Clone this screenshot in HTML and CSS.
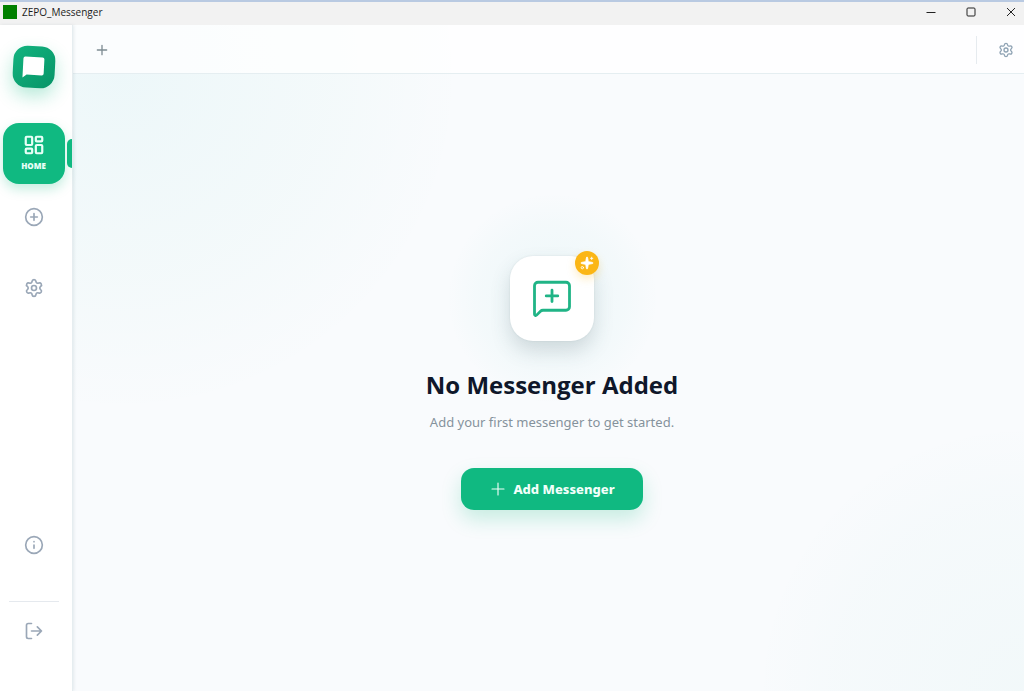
FILE: index.html
```html
<!DOCTYPE html>
<html lang="en">
<head>
<meta charset="utf-8">
<meta name="viewport" content="width=device-width, initial-scale=1">
<title>ZEPO_Messenger</title>
<link rel="stylesheet" href="styles.css">
</head>
<body>
<div class="window">
  <header class="titlebar">
    <span class="app-mark"></span>
    <span class="app-name">ZEPO_Messenger</span>
    <div class="window-controls">
      <button type="button" aria-label="Minimize"><svg width="10" height="10" viewBox="0 0 10 10"><path d="M0.5 5.5h9"/></svg></button>
      <button type="button" aria-label="Maximize"><svg width="10" height="10" viewBox="0 0 10 10"><rect x="1" y="1" width="8" height="8" rx="1"/></svg></button>
      <button type="button" aria-label="Close"><svg width="10" height="10" viewBox="0 0 10 10"><path d="M1 1l8 8M9 1l-8 8"/></svg></button>
    </div>
  </header>
  <div class="app">
    <nav class="sidebar" aria-label="Main">
      <div class="logo">
        <svg class="logo-mark" width="24" height="24" viewBox="0 0 24 24"><path d="M3 2h17a2 2 0 0 1 2 2v14a2 2 0 0 1-2 2H5l-4 3V4a2 2 0 0 1 2-2z"/></svg>
      </div>
      <button type="button" class="nav-item active">
        <svg class="icon" width="22" height="22" viewBox="0 0 24 24"><rect x="3" y="3" width="7" height="9" rx="1"/><rect x="14" y="3" width="7" height="5" rx="1"/><rect x="14" y="12" width="7" height="9" rx="1"/><rect x="3" y="16" width="7" height="5" rx="1"/></svg>
        <span class="nav-label">HOME</span>
      </button>
      <button type="button" class="nav-item" aria-label="Add">
        <svg class="icon" width="20" height="20" viewBox="0 0 24 24"><circle cx="12" cy="12" r="10"/><path d="M8 12h8M12 8v8"/></svg>
      </button>
      <button type="button" class="nav-item" aria-label="Settings">
        <svg class="icon" width="20" height="20" viewBox="0 0 24 24"><path d="M9.671 4.136a2.340 2.340 0 0 1 4.659 0 2.340 2.340 0 0 0 3.319 1.915 2.340 2.340 0 0 1 2.330 4.033 2.340 2.340 0 0 0 0 3.831 2.340 2.340 0 0 1-2.330 4.033 2.340 2.340 0 0 0-3.319 1.915 2.340 2.340 0 0 1-4.659 0 2.340 2.340 0 0 0-3.320-1.915 2.340 2.340 0 0 1-2.330-4.033 2.340 2.340 0 0 0 0-3.831A2.340 2.340 0 0 1 6.350 6.051a2.340 2.340 0 0 0 3.319-1.915"/><circle cx="12" cy="12" r="3"/></svg>
      </button>
      <div class="sidebar-foot">
        <button type="button" class="nav-item" aria-label="About">
          <svg class="icon" width="20" height="20" viewBox="0 0 24 24"><circle cx="12" cy="12" r="10"/><path d="M12 16v-4M12 8h.01"/></svg>
        </button>
        <hr class="divider">
        <button type="button" class="nav-item" aria-label="Log out">
          <svg class="icon" width="20" height="20" viewBox="0 0 24 24"><path d="M9 21H5a2 2 0 0 1-2-2V5a2 2 0 0 1 2-2h4M16 17l5-5-5-5M21 12H9"/></svg>
        </button>
      </div>
    </nav>
    <div class="workspace">
      <div class="tabbar">
        <button type="button" class="tab-add" aria-label="New tab"><svg class="icon" width="16" height="16" viewBox="0 0 24 24"><path d="M5 12h14M12 5v14"/></svg></button>
        <div class="tab-tools">
          <button type="button" aria-label="Settings"><svg class="icon" width="16" height="16" viewBox="0 0 24 24"><path d="M9.671 4.136a2.340 2.340 0 0 1 4.659 0 2.340 2.340 0 0 0 3.319 1.915 2.340 2.340 0 0 1 2.330 4.033 2.340 2.340 0 0 0 0 3.831 2.340 2.340 0 0 1-2.330 4.033 2.340 2.340 0 0 0-3.319 1.915 2.340 2.340 0 0 1-4.659 0 2.340 2.340 0 0 0-3.320-1.915 2.340 2.340 0 0 1-2.330-4.033 2.340 2.340 0 0 0 0-3.831A2.340 2.340 0 0 1 6.350 6.051a2.340 2.340 0 0 0 3.319-1.915"/><circle cx="12" cy="12" r="3"/></svg></button>
        </div>
      </div>
      <main class="empty">
        <div class="hero">
          <svg class="icon" width="42" height="42" viewBox="0 0 24 24"><path d="M22 17a2 2 0 0 1-2 2H6.828a2 2 0 0 0-1.414.586l-2.202 2.202A.71.71 0 0 1 2 21.286V5a2 2 0 0 1 2-2h16a2 2 0 0 1 2 2zM12 7.500v6.500M8.700 10.800h6.600"/></svg>
          <span class="badge"><svg class="icon" width="14" height="14" viewBox="0 0 24 24"><path fill="currentColor" d="M11 2.800a1 1 0 0 1 2 0l1 5.600a2 2 0 0 0 1.600 1.600l5.600 1a1 1 0 0 1 0 2l-5.600 1a2 2 0 0 0-1.600 1.600l-1 5.600a1 1 0 0 1-2 0l-1-5.600a2 2 0 0 0-1.600-1.600l-5.600-1a1 1 0 0 1 0-2l5.600-1a2 2 0 0 0 1.600-1.600z"/><path d="M20 2v4M22 4h-4"/><circle cx="4" cy="20" r="2"/></svg></span>
        </div>
        <h1>No Messenger Added</h1>
        <p>Add your first messenger to get started.</p>
        <button type="button" class="primary"><svg class="icon" width="18" height="18" viewBox="0 0 24 24"><path d="M4 12h16M12 4v16"/></svg>Add Messenger</button>
      </main>
    </div>
  </div>
</div>
</body>
</html>
```
FILE: styles.css
```css
* { box-sizing: border-box; }

body {
  margin: 0;
  font-family: "Noto Sans", "Open Sans", sans-serif;
  color: #0f172a;
}

button {
  padding: 0;
  border: 0;
  background: none;
  color: inherit;
  font: inherit;
}

svg { display: block; flex: none; }

.icon {
  fill: none;
  stroke: currentColor;
  stroke-width: 2;
  stroke-linecap: round;
  stroke-linejoin: round;
}

.window {
  display: flex;
  flex-direction: column;
  min-height: 100vh;
}

.titlebar {
  display: flex;
  align-items: center;
  height: 25px;
  padding: 0 8px 3px 3px;
  border-top: 2px solid #b9cae2;
  background: #f2f2f2;
}

.app-mark { width: 14px; height: 14px; background: #008000; }

.app-name {
  margin-left: 5px;
  font: 10px/16px "Open Sans", sans-serif;
  color: #1c1c1c;
}

.window-controls { display: flex; gap: 30px; margin-left: auto; }
.window-controls svg { fill: none; stroke: #222; }

.app { display: flex; flex: 1; }

.sidebar {
  z-index: 1;
  display: flex;
  flex-direction: column;
  align-items: center;
  flex: none;
  gap: 10px;
  width: 73px;
  padding: 21px 5px 22px 0;
  border-right: 1px solid #e6edf0;
  background: #fff;
  box-shadow: 1px 0 3px rgba(100, 130, 145, .14);
}

.logo {
  display: grid;
  place-items: center;
  width: 42px;
  height: 42px;
  margin-bottom: 25px;
  border-radius: 14px;
  background: linear-gradient(135deg, #12b47f, #079467);
  box-shadow: 0 8px 18px rgba(16, 185, 129, .3);
  transform: rotate(3deg);
}

.logo-mark { fill: #fff; }

.nav-item {
  position: relative;
  display: flex;
  flex-direction: column;
  align-items: center;
  width: 62px;
  height: 61px;
  padding-top: 13px;
  border-radius: 16px;
  color: #9aa7b7;
}

.nav-item.active {
  padding-top: 11px;
  background: #10b981;
  box-shadow: 0 5px 12px rgba(16, 185, 129, .25);
  color: #e8fff7;
}

.nav-item.active .icon { stroke-width: 2.400; }

.nav-item.active::after {
  content: "";
  position: absolute;
  top: 16px;
  right: -7px;
  width: 5px;
  height: 29px;
  border-radius: 5px 0 0 5px;
  background: #10b981;
}

.nav-label {
  margin-top: 4px;
  font-size: 8px;
  font-weight: 900;
  line-height: 12px;
}

.sidebar-foot {
  display: flex;
  flex-direction: column;
  align-items: center;
  margin-top: auto;
}

.divider {
  width: 50px;
  margin: 18px 0 6px;
  border: 0;
  border-top: 1px solid #e5e9ee;
}

.workspace {
  display: flex;
  flex: 1;
  flex-direction: column;
  min-width: 0;
  background:
    radial-gradient(circle 340px at 50px 50px, rgba(45, 190, 190, .06), rgba(16, 185, 150, .025) 60%, transparent),
    radial-gradient(circle 270px at 100% 100%, rgba(20, 170, 150, .03), rgba(20, 170, 150, .015) 70%, transparent),
    #f9fbfd;
}

.tabbar {
  display: flex;
  align-items: center;
  height: 49px;
  padding: 1px 0 0 21px;
  border-bottom: 1px solid #e5eef1;
  background: rgba(255, 255, 255, .75);
  color: #7e8c93;
}

.tab-tools {
  display: flex;
  align-items: center;
  height: 28px;
  margin-left: auto;
  padding: 0 10px 0 21px;
  border-left: 1px solid #e6ebef;
  color: #8fa3b4;
}

.empty {
  display: flex;
  flex: 1;
  flex-direction: column;
  align-items: center;
  justify-content: center;
  padding-left: 7px;
  background: radial-gradient(circle 106px at calc(50% + 4px) calc(50% - 84px), rgba(16, 175, 165, .05), rgba(16, 175, 165, .025) 70%, transparent);
}

.hero {
  position: relative;
  display: grid;
  place-items: center;
  width: 84px;
  height: 85px;
  border-radius: 23px;
  background: #fff;
  box-shadow: 0 10px 20px rgba(51, 80, 90, .18), 0 0 2px rgba(51, 80, 90, .12);
  color: #20b486;
}

.hero > .icon { stroke-width: 1.600; }

.badge {
  position: absolute;
  top: -5px;
  right: -5px;
  display: grid;
  place-items: center;
  width: 24px;
  height: 24px;
  border-radius: 50%;
  background: #fbb615;
  box-shadow: 0 4px 8px rgba(251, 182, 21, .25);
  color: #fff;
}

.badge .icon { stroke-width: 1.500; }

h1 {
  margin: 26px 0 0;
  font-family: "Open Sans", sans-serif;
  font-size: 24px;
  font-weight: 700;
  line-height: 36px;
}

p {
  margin: 9px 0 0;
  font-size: 13px;
  line-height: 20px;
  color: #85929c;
}

.primary {
  display: flex;
  align-items: center;
  gap: 6px;
  margin-top: 36px;
  padding: 11px 28px;
  border-radius: 13px;
  background: #10b981;
  box-shadow: 0 9px 20px rgba(16, 185, 129, .22);
  color: #f2fffa;
  font-size: 13px;
  font-weight: 800;
  line-height: 20px;
}

.primary .icon { stroke-width: 1.500; }
```
